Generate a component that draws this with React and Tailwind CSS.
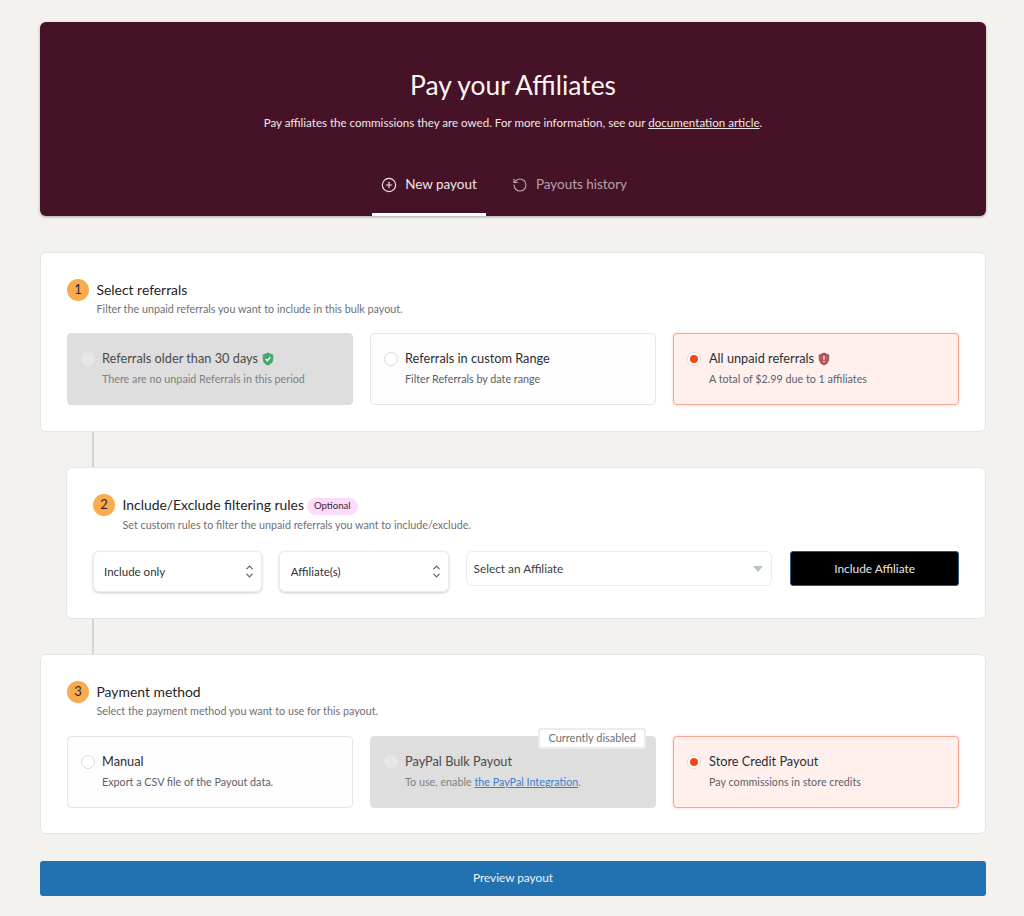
import React from 'react';
import { CirclePlus, RotateCcw, ChevronUp, ChevronDown } from 'lucide-react';

const font = "font-['Lato','Noto_Sans',sans-serif]";

function Shield({ color, children }) {
  return (
    <svg viewBox="0 0 24 24" className="ml-[3px] h-[14px] w-[14px]" fill={color}>
      <path d="M12 1 3 4.5v7c0 5.5 3.8 9.8 9 11.5 5.2-1.7 9-6 9-11.5v-7L12 1z" />
      {children}
    </svg>
  );
}

function Step({ num, title, sub, badge }) {
  return (
    <div>
      <div className="flex h-[22px] items-center">
        <div className="flex h-[22px] w-[22px] shrink-0 items-center justify-center rounded-full bg-[#fbaa4d] text-[13px] text-[#2b2b2b]">
          {num}
        </div>
        <h2 className="ml-[7.5px] text-[13.9px] leading-[22px] text-[#1f2328]">{title}</h2>
        {badge && (
          <span className="ml-[3px] mt-[2px] flex h-[17px] items-center rounded-full bg-[#fbdcfb] px-[7px] text-[9.6px] text-[#3a2440]">
            {badge}
          </span>
        )}
      </div>
      <p
        className={`ml-[29.5px] text-[10.75px] leading-[16px] text-[#6d7175] ${
          badge ? 'mt-[1px]' : 'mt-0'
        }`}
      >
        {sub}
      </p>
    </div>
  );
}

function Choice({ state, title, icon, children, tag }) {
  const box =
    state === 'disabled'
      ? 'bg-[#dedede] border-[#dedede]'
      : state === 'selected'
        ? 'bg-[#fff0ee] border-[#fba48f] shadow-[0_0_3px_rgba(251,140,110,0.45)]'
        : 'bg-[#fdfdfd] border-[#e6e6e6]';
  return (
    <div className={`relative flex h-[72px] items-start rounded border pl-[13px] ${box}`}>
      {tag && (
        <span className="absolute right-[9px] top-[-9px] flex h-[21px] items-center rounded-[3px] border-2 border-[#ececec] bg-white px-[8px] text-[11px] text-[#6d7175]">
          {tag}
        </span>
      )}
      <div
        className={`mt-[18px] flex h-[14px] w-[14px] shrink-0 items-center justify-center rounded-full ${
          state === 'disabled' ? 'bg-[#e6e6e6]' : 'border border-[#dcdcdc] bg-white'
        }`}
      >
        {state === 'selected' && <div className="h-2 w-2 rounded-full bg-[#f8480f]" />}
      </div>
      <div className={`mt-[15px] ${state === 'selected' ? 'ml-[8px]' : 'ml-[7px]'}`}>
        <div
          className={`flex h-[20px] items-center text-[12.75px] ${
            state === 'disabled' ? 'text-[#4a4a4a]' : 'text-[#2b2f33]'
          }`}
        >
          {title}
          {icon}
        </div>
        <div
          className={`text-[10.75px] leading-[20px] ${
            state === 'disabled' ? 'text-[#7d8084]' : 'text-[#5c6166]'
          }`}
        >
          {children}
        </div>
      </div>
    </div>
  );
}

function SelectBox({ label, className }) {
  return (
    <div
      className={`flex h-[41px] items-center justify-between rounded-md border border-[#ececec] bg-white pl-[10px] pr-[6px] text-[11.5px] text-[#2f3337] shadow-[0_1px_3px_rgba(0,0,0,0.2)] ${className}`}
    >
      {label}
      <div className="flex flex-col text-[#5c6166]">
        <ChevronUp className="-mb-[3px] h-[11px] w-[11px]" strokeWidth={2.6} />
        <ChevronDown className="h-[11px] w-[11px]" strokeWidth={2.6} />
      </div>
    </div>
  );
}

function Connector() {
  return <div className="ml-[52px] h-[35px] w-[2px] bg-[#d5d5d0]" />;
}

export default function App() {
  return (
    <div className={`min-h-[916px] bg-[#f3f2ee] pl-10 pr-[38px] pt-[22px] ${font}`}>
      <header className="flex h-[194px] flex-col items-center rounded-md bg-[#461227] shadow-[0_1px_3px_rgba(0,0,0,0.3)]">
        <h1 className="mt-[46px] text-[26.4px] leading-[34px] text-[#fbf6f2]">Pay your Affiliates</h1>
        <p className="mt-[13px] text-[11.57px] leading-[16px] text-[#f0e6e6]">
          Pay affiliates the commissions they are owed. For more information, see our{' '}
          <a className="underline">documentation article</a>.
        </p>
        <nav className="mt-auto flex text-[13.45px]">
          <div className="flex h-[60px] w-[114px] items-center justify-center gap-2 border-b-[3px] border-white text-[#f3e6e6]">
            <CirclePlus className="h-4 w-4" strokeWidth={1.7} />
            New payout
          </div>
          <div className="flex h-[60px] items-center gap-2 border-b-[3px] border-transparent pl-[26px] pr-[27px] text-[#b9a3aa]">
            <RotateCcw className="h-4 w-4" strokeWidth={1.7} />
            Payouts history
          </div>
        </nav>
      </header>

      <section className="mt-9 h-[180px] rounded-md border border-[#e6e6e6] bg-white px-[26px] pt-[26px]">
        <Step num="1" title="Select referrals" sub="Filter the unpaid referrals you want to include in this bulk payout." />
        <div className="mt-4 grid grid-cols-3 gap-[17px]">
          <Choice
            state="disabled"
            title="Referrals older than 30 days"
            icon={
              <Shield color="#46a86c">
                <path d="m8 12 3 3 5-6" fill="none" stroke="#fff" strokeWidth="2.4" />
              </Shield>
            }
          >
            There are no unpaid Referrals in this period
          </Choice>
          <Choice state="normal" title="Referrals in custom Range">
            Filter Referrals by date range
          </Choice>
          <Choice
            state="selected"
            title="All unpaid referrals"
            icon={
              <Shield color="#b4585f">
                <path d="M12 7v6M12 15.5v2" fill="none" stroke="#fff" strokeWidth="2.2" />
              </Shield>
            }
          >
            A total of $2.99 due to 1 affiliates
          </Choice>
        </div>
      </section>

      <Connector />

      <section className="ml-[26px] h-[152px] rounded-md border border-[#e6e6e6] bg-white px-[26px] pt-[26px]">
        <Step
          num="2"
          title="Include/Exclude filtering rules"
          badge="Optional"
          sub="Set custom rules to filter the unpaid referrals you want to include/exclude."
        />
        <div className="mt-[18px] flex items-start">
          <SelectBox label="Include only" className="w-[169px]" />
          <SelectBox label="Affiliate(s)" className="ml-[17px] w-[170px] pl-[11px]" />
          <div className="ml-[17px] flex h-[35px] w-[307px] items-center justify-between rounded-md border border-[#ececec] bg-white pl-[7px] pr-[8px] text-[11.8px] text-[#3a3e42]">
            Select an Affiliate
            <div className="h-0 w-0 border-x-[5px] border-t-[6px] border-x-transparent border-t-[#b4c2c8]" />
          </div>
          <button className="ml-[18px] h-[35px] w-[169px] rounded-[3px] border border-[#2c5a80] bg-black text-[11.9px] text-[#e8e4ea]">
            Include Affiliate
          </button>
        </div>
      </section>

      <Connector />

      <section className="h-[180px] rounded-md border border-[#e6e6e6] bg-white px-[26px] pt-[26px]">
        <Step num="3" title="Payment method" sub="Select the payment method you want to use for this payout." />
        <div className="mt-[17px] grid grid-cols-3 gap-[17px]">
          <Choice state="normal" title="Manual">
            Export a CSV file of the Payout data.
          </Choice>
          <Choice state="disabled" title="PayPal Bulk Payout" tag="Currently disabled">
            To use, enable <a className="text-[#3d7dd0] underline">the PayPal Integration</a>.
          </Choice>
          <Choice state="selected" title="Store Credit Payout">
            Pay commissions in store credits
          </Choice>
        </div>
      </section>

      <button className="mt-[27px] block h-[35px] w-full rounded-[3px] bg-[#2271b1] pb-px text-[11.8px] text-[#eef4f9]">
        Preview payout
      </button>
    </div>
  );
}
